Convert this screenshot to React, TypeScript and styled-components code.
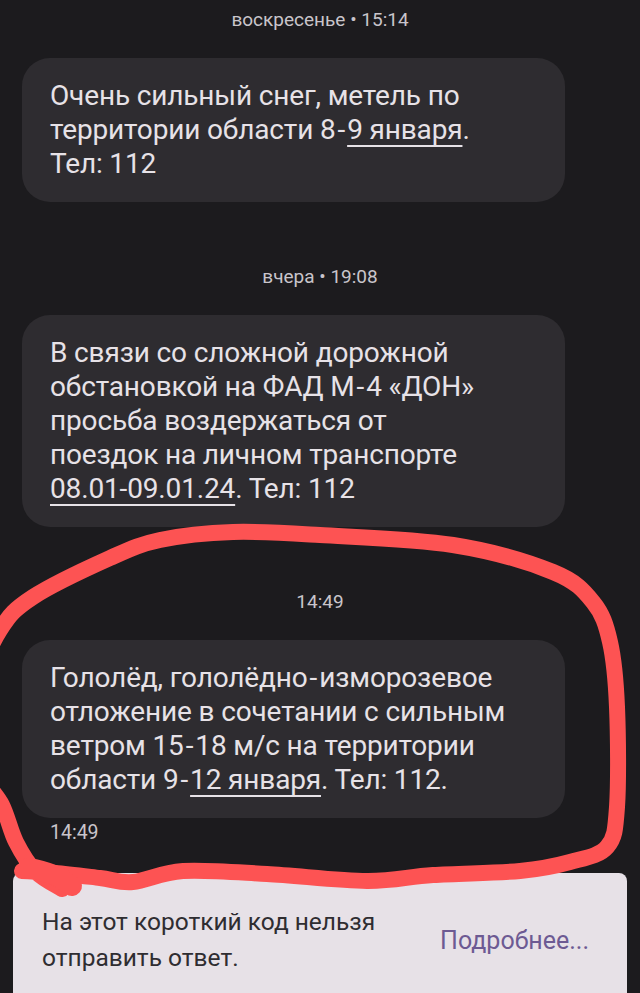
import React from 'react';
import styled, { createGlobalStyle } from 'styled-components';

const GlobalStyle = createGlobalStyle`
  html, body {
    margin: 0;
    padding: 0;
    background: #1c1b1e;
  }
  body {
    font-family: Roboto, "Noto Sans", "Liberation Sans", sans-serif;
  }
`;

const Screen = styled.div`
  position: relative;
  width: 640px;
  height: 993px;
  overflow: hidden;
  background: #1c1b1e;
  display: flex;
  flex-direction: column;
  padding-top: 10px;
  box-sizing: border-box;
`;

const Stamp = styled.div<{ $first?: boolean }>`
  margin-top: ${(p) => (p.$first ? '0' : '65px')};
  height: 20px;
  line-height: 20px;
  text-align: center;
  font-size: 19px;
  color: #c9c5cb;
`;

const Bubble = styled.div`
  margin: 28px 0 0 22px;
  width: 543px;
  box-sizing: border-box;
  padding: 21px 28px;
  border-radius: 28px;
  background: #2e2c30;
  color: #e7e2e7;
  font-size: 28px;
  line-height: 34px;
  letter-spacing: -0.15px;
`;

const Line = styled.div`
  white-space: nowrap;
`;

const Link = styled.span`
  text-decoration: underline;
  text-decoration-thickness: 2px;
  text-underline-offset: 6px;
`;

const Dash = styled.span`
  padding: 0 2px;
`;

const SentTime = styled.div`
  margin: 5px 0 0 50px;
  height: 20px;
  line-height: 20px;
  font-size: 19.5px;
  color: #c9c5cb;
`;

const Notice = styled.div`
  margin: 30px 13px 0;
  flex: none;
  height: 134px;
  border-radius: 8px 8px 0 0;
  background: #e7e1e7;
  display: flex;
  align-items: center;
  justify-content: space-between;
  padding: 0 38px 0 29px;
  box-sizing: border-box;
`;

const NoticeText = styled.div`
  font-size: 24.5px;
  line-height: 36px;
  color: #2f2d31;
`;

const More = styled.div`
  font-size: 25px;
  color: #6d5a93;
`;

const Overlay = styled.svg`
  position: absolute;
  left: 0;
  top: 0;
  pointer-events: none;
`;

// hand-drawn ring around the last message
const ring: [number, number][] = [
  [62, 889], [36, 872], [16, 842], [2, 805], [-18, 775], [-28, 735], [-26, 690],
  [0, 630], [33, 597], [110, 558], [160, 540], [233, 532], [320, 535], [453, 545],
  [553, 572], [593, 602], [610, 642], [617, 707], [617, 807], [607, 847],
  [570, 862], [520, 871], [433, 875], [367, 881], [267, 874], [183, 871],
  [133, 882], [100, 878], [55, 873], [22, 871],
];

function smoothPath(pts: [number, number][]) {
  let d = `M ${pts[0][0]} ${pts[0][1]}`;
  for (let i = 0; i < pts.length - 1; i++) {
    const p0 = pts[i - 1] || pts[i];
    const p1 = pts[i];
    const p2 = pts[i + 1];
    const p3 = pts[i + 2] || p2;
    const c1x = p1[0] + (p2[0] - p0[0]) / 6;
    const c1y = p1[1] + (p2[1] - p0[1]) / 6;
    const c2x = p2[0] - (p3[0] - p1[0]) / 6;
    const c2y = p2[1] - (p3[1] - p1[1]) / 6;
    d += ` C ${c1x} ${c1y} ${c2x} ${c2y} ${p2[0]} ${p2[1]}`;
  }
  return d;
}

export default function App() {
  return (
    <>
      <GlobalStyle />
      <Screen>
        <Stamp $first>воскресенье • 15:14</Stamp>
        <Bubble>
          <Line>Очень сильный снег, метель по</Line>
          <Line>
            территории области 8<Dash>-</Dash><Link>9 января</Link>.
          </Line>
          <Line>Тел: 112</Line>
        </Bubble>

        <Stamp>вчера • 19:08</Stamp>
        <Bubble>
          <Line>В связи со сложной дорожной</Line>
          <Line>обстановкой на ФАД М<Dash>-</Dash>4 «ДОН»</Line>
          <Line>просьба воздержаться от</Line>
          <Line>поездок на личном транспорте</Line>
          <Line>
            <Link>08.01-09.01.24</Link>. Тел: 112
          </Line>
        </Bubble>

        <Stamp>14:49</Stamp>
        <Bubble>
          <Line>Гололёд, гололёдно<Dash>-</Dash>изморозевое</Line>
          <Line>отложение в сочетании с сильным</Line>
          <Line>ветром 15<Dash>-</Dash>18 м/с на территории</Line>
          <Line>
            области 9<Dash>-</Dash><Link>12 января</Link>. Тел: 112.
          </Line>
        </Bubble>
        <SentTime>14:49</SentTime>

        <Notice>
          <NoticeText>
            На этот короткий код нельзя
            <br />
            отправить ответ.
          </NoticeText>
          <More>Подробнее...</More>
        </Notice>

        <Overlay width="640" height="993" viewBox="0 0 640 993">
          <path
            d={smoothPath(ring)}
            fill="none"
            stroke="#fd5353"
            strokeWidth="16"
            strokeLinecap="round"
            strokeLinejoin="round"
          />
          <path
            d="M 28 868 Q 55 872 72 886"
            fill="none"
            stroke="#fd5353"
            strokeWidth="20"
            strokeLinecap="round"
          />
        </Overlay>
      </Screen>
    </>
  );
}
